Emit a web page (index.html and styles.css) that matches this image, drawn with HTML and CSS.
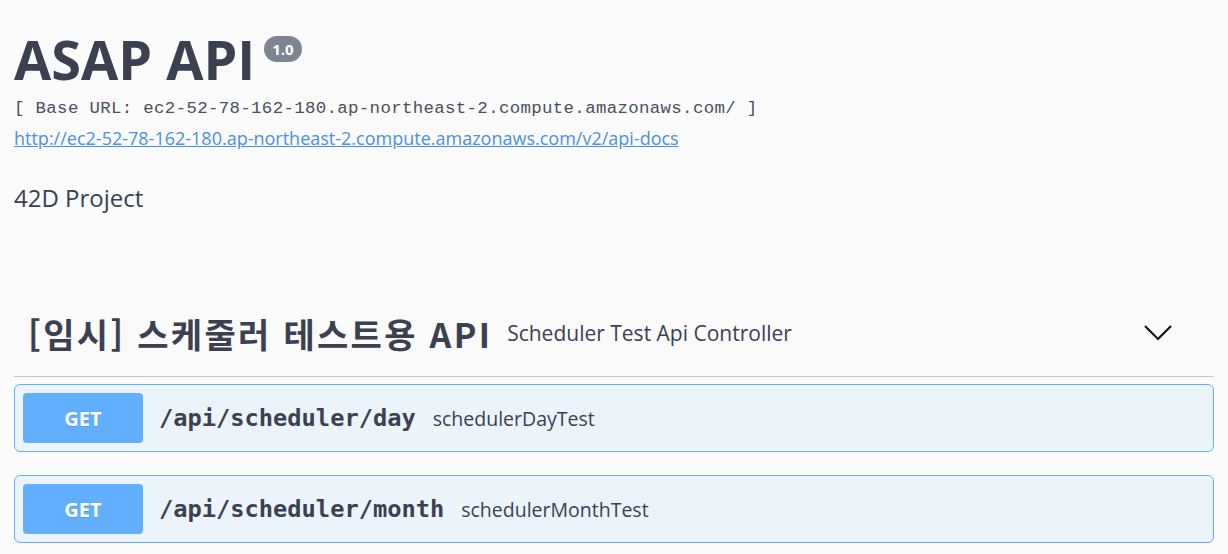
FILE: index.html
```html
<!DOCTYPE html>
<html lang="ko">
<head>
<meta charset="utf-8">
<title>ASAP API</title>
<link rel="stylesheet" href="styles.css">
</head>
<body>
<div class="wrapper">
  <section class="info">
    <h2 class="title">ASAP API<span class="version">1.0</span></h2>
    <pre class="base-url">[ Base URL: ec2-52-78-162-180.ap-northeast-2.compute.amazonaws.com/ ]</pre>
    <a class="docs-link" href="#">http://ec2-52-78-162-180.ap-northeast-2.compute.amazonaws.com/v2/api-docs</a>
    <p class="description">42D Project</p>
  </section>

  <section class="tag-section">
    <div class="tag-header">
      <h3 class="tag-name">[임시] 스케줄러 테스트용 API</h3>
      <span class="tag-desc">Scheduler Test Api Controller</span>
      <svg class="chevron" width="30" height="30" viewBox="0 0 30 30" aria-hidden="true">
        <path d="M2 8 L15 21 L28 8" fill="none" stroke="#111" stroke-width="2.2"/>
      </svg>
    </div>

    <div class="opblock">
      <span class="method">GET</span>
      <span class="path">/api/scheduler/day</span>
      <span class="summary">schedulerDayTest</span>
    </div>
    <div class="opblock">
      <span class="method">GET</span>
      <span class="path">/api/scheduler/month</span>
      <span class="summary">schedulerMonthTest</span>
    </div>
  </section>
</div>
</body>
</html>
```

FILE: styles.css
```css
html, body {
  margin: 0;
  padding: 0;
  background: #fafafa;
}

body {
  font-family: "Open Sans", "Noto Sans", sans-serif;
  color: #3b4151;
}

.wrapper {
  margin: 0 14px;
}

.info {
  display: flex;
  flex-direction: column;
  align-items: flex-start;
}

.title {
  display: flex;
  align-items: flex-start;
  margin: 29px 0 0;
  font-size: 54px;
  line-height: 60px;
  font-weight: 700;
  color: #3b4151;
}

.version {
  margin: 7px 0 0 9px;
  padding: 3px 8px;
  font-size: 15px;
  line-height: 20px;
  font-weight: 700;
  color: #fff;
  background: #7d8492;
  border-radius: 57px;
}

.base-url {
  margin: 10px 0 0;
  font-family: "Liberation Mono", monospace;
  font-size: 17.4px;
  line-height: 20px;
  letter-spacing: 0.34px;
  color: #4a4f5c;
}

.docs-link {
  margin-top: 9px;
  font-size: 18px;
  line-height: 20px;
  color: #4990e2;
  text-decoration: underline;
}

.description {
  margin: 35px 0 0;
  font-size: 24px;
  line-height: 30px;
  color: #3b4151;
}

.tag-section {
  margin-top: 77px;
}

.tag-header {
  display: flex;
  align-items: center;
  height: 86px;
  padding: 0 41px 0 14px;
  border-bottom: 1px solid #c6c7cb;
  margin-bottom: 7px;
}

.tag-name {
  margin: 0;
  font-family: "Noto Sans CJK KR", "Open Sans", sans-serif;
  font-size: 34px;
  font-weight: 700;
  letter-spacing: 2.3px;
  color: #3b4151;
}

.tag-desc {
  flex: 1;
  margin-left: 15px;
  font-size: 21px;
  color: #3b4151;
}

.chevron {
  flex: none;
}

.opblock {
  display: flex;
  align-items: center;
  height: 50px;
  padding: 8px;
  margin-bottom: 23px;
  border: 1px solid #61affe;
  border-radius: 6px;
  background: #ebf3fb;
}

.method {
  display: flex;
  align-items: center;
  justify-content: center;
  width: 120px;
  height: 50px;
  border-radius: 4px;
  background: #61affe;
  color: #fff;
  font-size: 20px;
  font-weight: 700;
  text-shadow: 0 1px 0 rgba(0, 0, 0, 0.15);
}

.path {
  margin-left: 16px;
  font-family: "DejaVu Sans Mono", monospace;
  font-size: 23.7px;
  font-weight: 700;
  color: #3b4151;
}

.summary {
  margin-left: 17px;
  font-size: 19.5px;
  color: #3b4151;
}
```
